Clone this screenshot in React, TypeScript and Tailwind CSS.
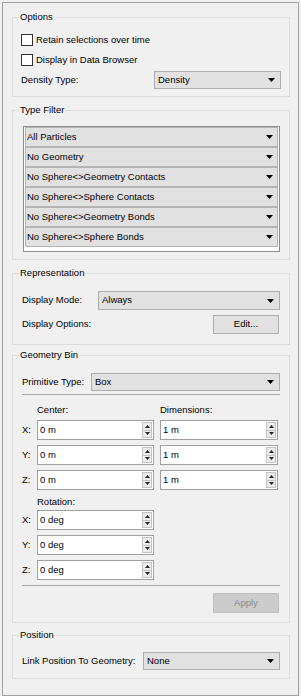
import React from "react";

function Arrow() {
  return (
    <svg width="7" height="4" viewBox="0 0 7 4" className="shrink-0">
      <path d="M0 0H7L3.5 4Z" fill="#000" />
    </svg>
  );
}

function Combo({ text, className = "" }: { text: string; className?: string }) {
  return (
    <div
      className={
        "flex h-[18px] items-center justify-between border border-[#adadad] bg-[#e1e1e1] pl-[3px] pr-[5px] " +
        className
      }
    >
      <span>{text}</span>
      <Arrow />
    </div>
  );
}

function Group({
  title,
  className = "",
  children,
}: {
  title: string;
  className?: string;
  children: React.ReactNode;
}) {
  return (
    <fieldset className={"m-0 min-w-0 border border-[#dcdcdc] p-0 " + className}>
      <legend className="ml-[6px] px-[1px] leading-[12px]">{title}</legend>
      {children}
    </fieldset>
  );
}

function Checkbox({ label }: { label: string }) {
  return (
    <div className="flex h-[20px] items-center">
      <div className="h-[12px] w-[12px] border border-[#333333] bg-white" />
      <span className="ml-[3px]">{label}</span>
    </div>
  );
}

function SpinArrow({ up }: { up?: boolean }) {
  return (
    <svg width="5" height="3" viewBox="0 0 5 3">
      <path d={up ? "M0 3H5L2.5 0Z" : "M0 0H5L2.5 3Z"} fill="#222" />
    </svg>
  );
}

function Spin({ value, className = "" }: { value: string; className?: string }) {
  return (
    <div className={"flex h-[20px] items-stretch border border-[#a0a0a0] bg-white " + className}>
      <span className="flex flex-1 items-center pl-[2px]">{value}</span>
      <div className="flex w-[12px] flex-col p-[1px]">
        <div className="flex flex-1 items-center justify-center border border-[#c4c4c4] bg-[#ececec]">
          <SpinArrow up />
        </div>
        <div className="flex flex-1 items-center justify-center border border-t-0 border-[#c4c4c4] bg-[#ececec]">
          <SpinArrow />
        </div>
      </div>
    </div>
  );
}

function Separator({ className = "" }: { className?: string }) {
  return <div className={"h-[1px] bg-[#a8a8a8] " + className} />;
}

const filters = [
  "All Particles",
  "No Geometry",
  "No Sphere<>Geometry Contacts",
  "No Sphere<>Sphere Contacts",
  "No Sphere<>Geometry Bonds",
  "No Sphere<>Sphere Bonds",
];

export default function App() {
  return (
    <div className="h-[696px] w-[301px] bg-[#f0f0f0] p-[2px] font-['Liberation_Sans',Arial,sans-serif] text-[9.5px] text-black">
      <div className="flex h-[694px] flex-col border border-[#a0a0a0] pl-[9px] pr-[8px] pt-[8px]">
        <Group title="Options">
          <div className="px-[8px] pb-[7px] pt-[7px]">
            <Checkbox label="Retain selections over time" />
            <Checkbox label="Display in Data Browser" />
            <div className="mt-[1px] flex h-[18px] items-center justify-between">
              <span>Density Type:</span>
              <Combo text="Density" className="w-[127px]" />
            </div>
          </div>
        </Group>

        <Group title="Type Filter" className="mt-[7px]">
          <div className="pb-[7px] pl-[10px] pr-[9px] pt-[10px]">
            <div className="border border-[#8c8c8c] bg-white px-[1px] pb-[4px]">
              {filters.map((f) => (
                <div
                  key={f}
                  className="flex h-[20px] items-center justify-between border border-[#b4b4b4] bg-[#e1e1e1] pl-[1px] pr-[4px]"
                >
                  <span>{f}</span>
                  <Arrow />
                </div>
              ))}
            </div>
          </div>
        </Group>

        <Group title="Representation" className="mt-[7px]">
          <div className="pb-[10px] pl-[9px] pr-[9px] pt-[12px]">
            <div className="flex h-[19px] items-center justify-between">
              <span>Display Mode:</span>
              <Combo text="Always" className="h-[19px] w-[182px]" />
            </div>
            <div className="mt-[5px] flex h-[19px] items-center justify-between pr-[1px]">
              <span>Display Options:</span>
              <div className="flex h-[19px] w-[66px] items-center justify-center border border-[#adadad] bg-[#e1e1e1]">
                Edit...
              </div>
            </div>
          </div>
        </Group>

        <Group title="Geometry Bin" className="mt-[4px]">
          <div className="pb-[9px] pl-[9px] pr-[9px] pt-[12px]">
            <div className="flex h-[18px] items-center justify-between">
              <span>Primitive Type:</span>
              <Combo text="Box" className="w-[189px]" />
            </div>
            <Separator className="mt-[3px]" />
            <div className="mt-[9px] grid grid-cols-[15px_117px_124px]">
              <span className="col-start-2 h-[12px] leading-[12px]">Center:</span>
              <span className="col-start-3 h-[12px] pl-[6px] leading-[12px]">Dimensions:</span>
            </div>
            <div className="mt-[4px] grid grid-cols-[15px_117px_124px] gap-y-[5px]">
              {["X:", "Y:", "Z:"].map((a) => (
                <React.Fragment key={a}>
                  <span className="flex h-[20px] items-center">{a}</span>
                  <Spin value="0 m" />
                  <div className="pl-[6px]">
                    <Spin value="1 m" />
                  </div>
                </React.Fragment>
              ))}
            </div>
            <div className="mt-[6px] grid grid-cols-[15px_117px]">
              <span className="col-start-2 h-[12px] leading-[12px]">Rotation:</span>
            </div>
            <div className="mt-[2px] grid grid-cols-[15px_117px] gap-y-[5px]">
              {["X:", "Y:", "Z:"].map((a) => (
                <React.Fragment key={a}>
                  <span className="flex h-[20px] items-center">{a}</span>
                  <Spin value="0 deg" />
                </React.Fragment>
              ))}
            </div>
            <Separator className="mt-[5px]" />
            <div className="mt-[7px] flex justify-end pr-[1px]">
              <div className="flex h-[20px] w-[66px] items-center justify-center border border-[#bfbfbf] bg-[#cccccc] text-[#8a8a8a]">
                Apply
              </div>
            </div>
          </div>
        </Group>

        <Group title="Position" className="mt-[6px]">
          <div className="pb-[8px] pl-[9px] pr-[9px] pt-[11px]">
            <div className="flex h-[18px] items-center justify-between">
              <span>Link Position To Geometry:</span>
              <Combo text="None" className="w-[137px]" />
            </div>
          </div>
        </Group>
      </div>
    </div>
  );
}
